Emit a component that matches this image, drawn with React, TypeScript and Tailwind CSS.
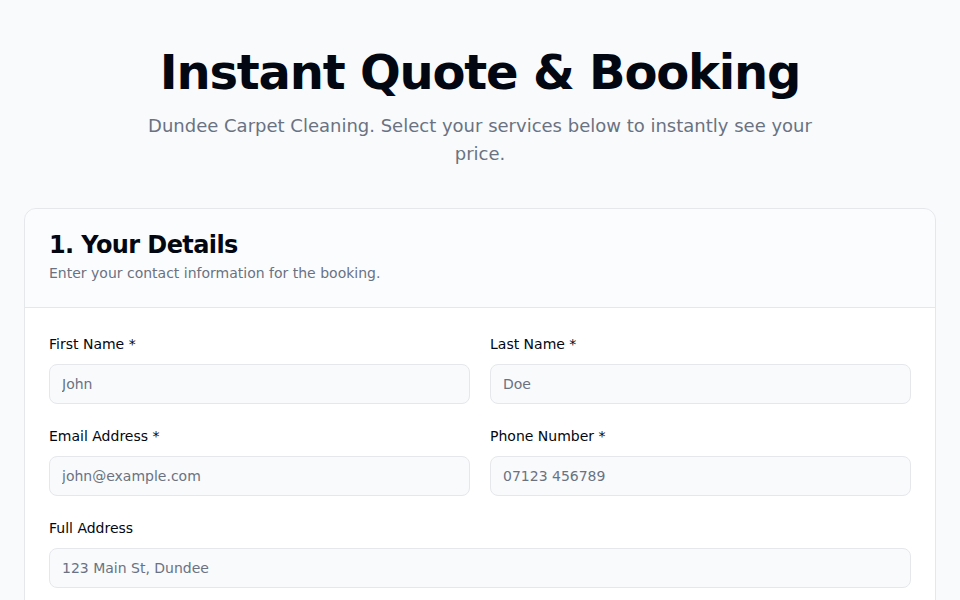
import { useState } from "react";

type Field = {
  id: string;
  label: string;
  placeholder: string;
  type?: string;
  full?: boolean;
};

const FIELDS: Field[] = [
  { id: "firstName", label: "First Name *", placeholder: "John" },
  { id: "lastName", label: "Last Name *", placeholder: "Doe" },
  { id: "email", label: "Email Address *", placeholder: "john@example.com", type: "email" },
  { id: "phone", label: "Phone Number *", placeholder: "07123 456789", type: "tel" },
  { id: "address", label: "Full Address", placeholder: "123 Main St, Dundee", full: true },
];

export default function App() {
  const [values, setValues] = useState<Record<string, string>>({});

  return (
    <div className="min-h-screen bg-slate-50 font-['DejaVu_Sans',_'Liberation_Sans',_sans-serif] text-gray-950">
      <main className="px-6 pt-12 pb-12">
        {/* Hero */}
        <header className="mb-10 flex flex-col items-center text-center">
          <h1 className="text-5xl leading-none font-bold tracking-tight text-gray-950">
            Instant Quote &amp; Booking
          </h1>
          <p className="mx-auto mt-4 max-w-2xl text-lg leading-7 text-gray-500">
            Dundee Carpet Cleaning. Select your services below to instantly see your price.
          </p>
        </header>

        {/* Details card */}
        <section className="overflow-hidden rounded-xl border border-gray-200 bg-white">
          <div className="border-b border-gray-200 bg-slate-50/50 p-6">
            <h2 className="text-2xl leading-none font-bold tracking-tight text-gray-950">
              1. Your Details
            </h2>
            <p className="mt-1.5 text-sm leading-5 text-gray-500">
              Enter your contact information for the booking.
            </p>
          </div>

          <div className="grid grid-cols-2 gap-x-5 gap-y-[22px] px-6 pt-[26px] pb-6">
            {FIELDS.map((field) => (
              <div
                key={field.id}
                className={field.full ? "col-span-2 flex flex-col gap-2.5" : "flex flex-col gap-2.5"}
              >
                <label htmlFor={field.id} className="text-sm leading-5 font-medium text-gray-950">
                  {field.label}
                </label>
                <input
                  id={field.id}
                  type={field.type ?? "text"}
                  placeholder={field.placeholder}
                  value={values[field.id] ?? ""}
                  onChange={(e) => setValues((prev) => ({ ...prev, [field.id]: e.target.value }))}
                  className="h-10 w-full rounded-lg border border-gray-200 bg-slate-50 px-3 text-sm text-gray-950 outline-none placeholder:text-gray-500 focus:border-gray-400"
                />
              </div>
            ))}
          </div>
        </section>
      </main>
    </div>
  );
}
